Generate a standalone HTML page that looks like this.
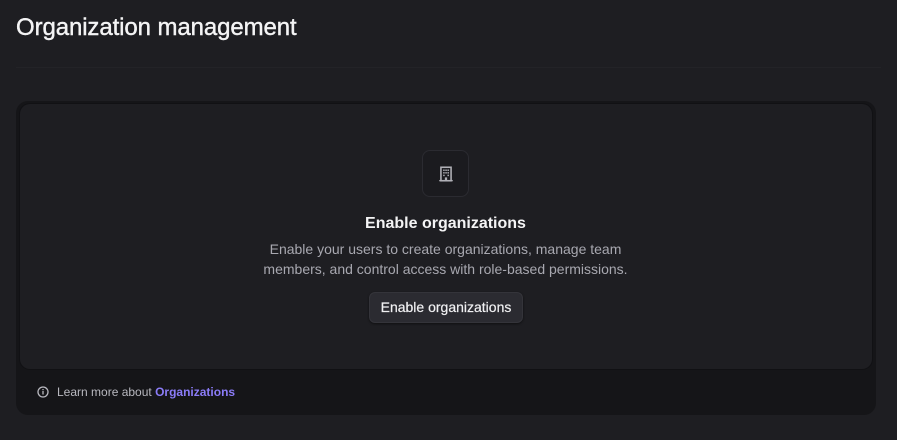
<!DOCTYPE html>
<html><head><style>
*{box-sizing:border-box;margin:0;padding:0}
body{width:897px;height:440px;background:#1e1e22;font-family:"Liberation Sans",sans-serif;color:#fff;position:relative;overflow:hidden}
h1{position:absolute;left:16px;top:14px;font-size:24px;font-weight:500;letter-spacing:-0.1px;color:#f4f4f5;-webkit-text-stroke:0.4px #f4f4f5}
.hr{position:absolute;left:16px;right:16px;top:67px;height:1px;background:#232327}
.outer{position:absolute;left:16px;top:101px;width:860px;height:314px;background:#151518;border-radius:12px}
.inner{position:absolute;left:20px;top:104px;width:852px;height:265px;background:#1e1e22;border-radius:10px;box-shadow:0 0 0 1px #111114}
.icon{position:absolute;left:422px;top:150px;width:47px;height:47px;border:1px solid #2b2b31;border-radius:8px;background:#1b1b1f}
.icon svg{position:absolute;left:14px;top:14px}
.t{position:absolute;left:0;width:891px;text-align:center}
.btn{position:absolute;left:369px;top:292px;width:154px;height:31px;background:#2b2b31;border-radius:6px;border:1px solid #34343a;font-size:14px;color:#f0f0f2;text-align:center;line-height:29px;-webkit-text-stroke:0.2px #f0f0f2;box-shadow:0 1px 2px rgba(0,0,0,.5)}
.foot{position:absolute;left:37px;top:385px;font-size:12px;color:#b8b8bf;display:flex;align-items:center;gap:8px}
.foot b{color:#8b7cf8;font-weight:600}
</style></head><body>
<h1>Organization management</h1>
<div class="hr"></div>
<div class="outer"></div>
<div class="inner"></div>
<div class="icon"><svg width="18" height="18" viewBox="0 0 16 16"><rect x="3.5" y="2" width="9" height="12" fill="none" stroke="#b0b0b6" stroke-width="1.4"/><g fill="#b0b0b6"><rect x="5.5" y="4" width="1.3" height="1.3"/><rect x="7.4" y="4" width="1.3" height="1.3"/><rect x="9.3" y="4" width="1.3" height="1.3"/><rect x="5.5" y="6.3" width="1.3" height="1.3"/><rect x="7.4" y="6.3" width="1.3" height="1.3"/><rect x="9.3" y="6.3" width="1.3" height="1.3"/><rect x="5.5" y="8.6" width="1.3" height="1.3"/><rect x="9.3" y="8.6" width="1.3" height="1.3"/><rect x="7" y="11" width="2" height="3"/><rect x="2" y="13.3" width="12" height="1.2"/></g></svg></div>
<div class="t" style="top:215px;font-size:16px;font-weight:600;color:#f4f4f5">Enable organizations</div>
<div class="t" style="top:239px;font-size:14px;line-height:20px;color:#a8a8b0">Enable your users to create organizations, manage team<br>members, and control access with role-based permissions.</div>
<div class="btn">Enable organizations</div>
<div class="foot"><svg width="12" height="12" viewBox="0 0 12 12"><circle cx="6" cy="6" r="5" fill="none" stroke="#b8b8bf" stroke-width="1.3"/><rect x="5.35" y="5" width="1.3" height="3.5" fill="#b8b8bf"/><rect x="5.35" y="3" width="1.3" height="1.2" fill="#b8b8bf"/></svg><span>Learn more about <b>Organizations</b></span></div>
</body></html>
